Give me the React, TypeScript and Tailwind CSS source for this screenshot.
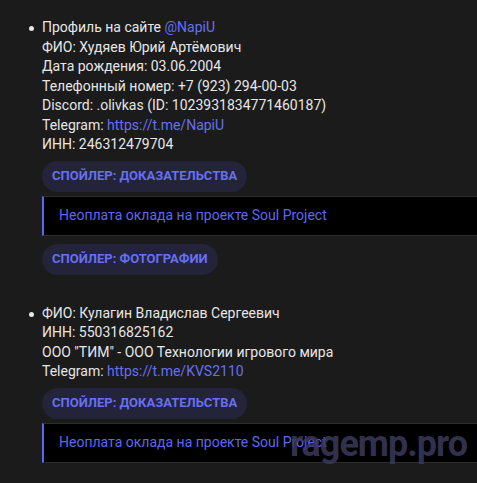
import type { ReactNode } from 'react';

const link = 'text-[#6670f0]';

function Spoiler({ title, tight }: { title: string; tight?: boolean }) {
  return (
    <div className={tight ? 'mt-[6px]' : 'mt-2'}>
      <span className="inline-flex h-[31px] items-center rounded-full bg-[#23233a] px-[10px] text-[13px] font-bold uppercase text-[#6670f0]">
        Спойлер: {title}
      </span>
    </div>
  );
}

function Quote({ children }: { children: ReactNode }) {
  return (
    <div className="mt-1 flex h-10 items-center border-y border-l-2 border-y-[#2c2c2c] border-l-[#5b66ee] bg-black pl-[15px] text-[14px] text-[#5d68f0]">
      {children}
    </div>
  );
}

function Item({ lines, children }: { lines: ReactNode[]; children?: ReactNode }) {
  return (
    <li className="relative">
      <span className="absolute left-[-13px] top-[8px] h-[5px] w-[5px] rounded-full bg-[#e6e6e6]" />
      <div className="leading-[19.5px]">
        {lines.map((l, i) => (
          <div key={i}>{l}</div>
        ))}
      </div>
      {children}
    </li>
  );
}

export default function App() {
  return (
    <main
      className="relative min-h-screen overflow-hidden bg-[#1b1b1b] pt-[18px] text-[14px] text-[#e6e6e6]"
      style={{ fontFamily: 'Roboto, "Noto Sans", sans-serif' }}
    >
      <ul className="flex flex-col gap-[29px] pl-[42px]">
        <Item
          lines={[
            <>Профиль на сайте <span className={link}>@NapiU</span></>,
            'ФИО: Худяев Юрий Артёмович',
            'Дата рождения: 03.06.2004',
            'Телефонный номер: +7 (923) 294-00-03',
            'Discord: .olivkas (ID: 1023931834771460187)',
            <>Telegram: <span className={link}>https://t.me/NapiU</span></>,
            'ИНН: 246312479704',
          ]}
        >
          <Spoiler title="Доказательства" tight />
          <Quote>Неоплата оклада на проекте Soul Project</Quote>
          <Spoiler title="Фотографии" />
        </Item>
        <Item
          lines={[
            'ФИО: Кулагин Владислав Сергеевич',
            'ИНН: 550316825162',
            'ООО "ТИМ" - ООО Технологии игрового мира',
            <>Telegram: <span className={link}>https://t.me/KVS2110</span></>,
          ]}
        >
          <Spoiler title="Доказательства" tight />
          <Quote>Неоплата оклада на проекте Soul Project</Quote>
        </Item>
      </ul>
      <span className="pointer-events-none absolute left-[290px] top-[426px] text-[36px] font-bold leading-[36px] tracking-[-1px] text-[#3b3a5c]/85">
        ragemp.pro
      </span>
    </main>
  );
}
